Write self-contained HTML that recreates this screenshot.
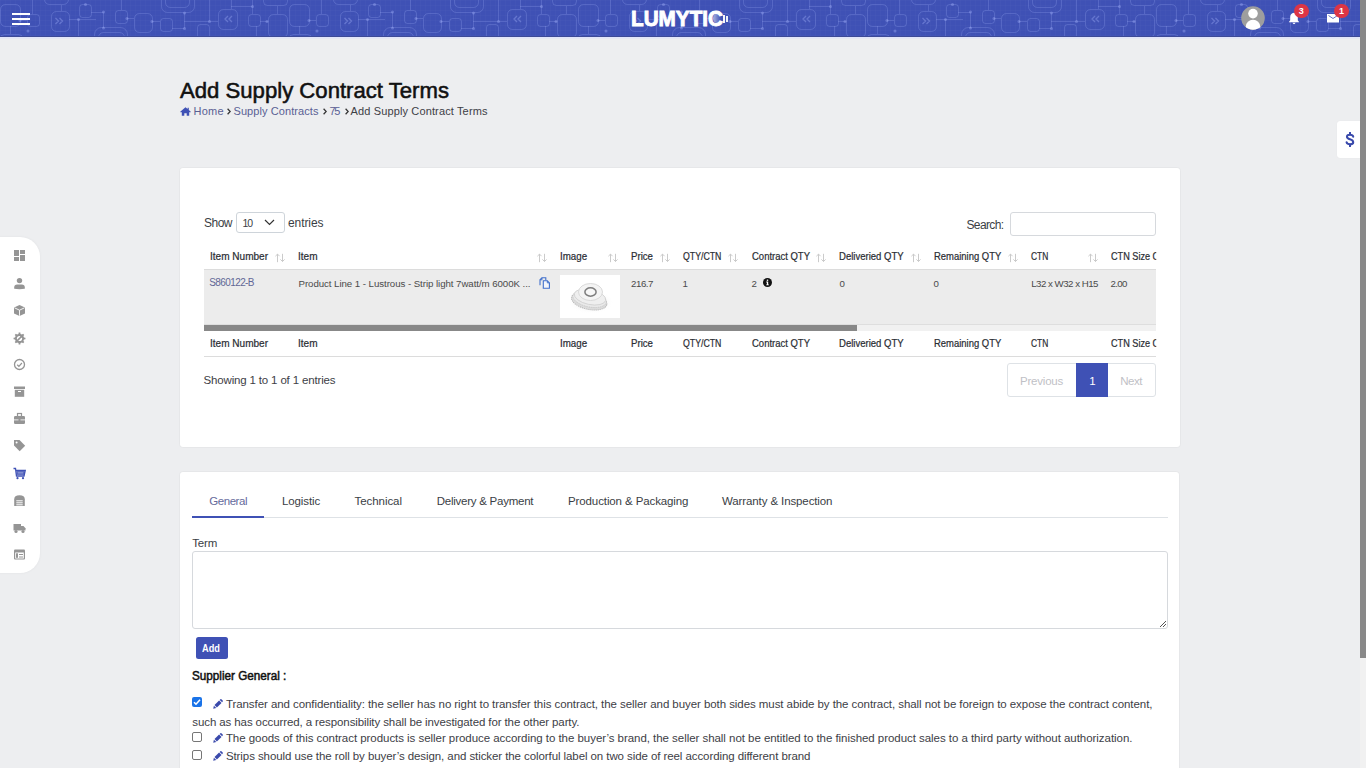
<!DOCTYPE html>
<html><head><meta charset="utf-8">
<style>
html,body{margin:0;padding:0;width:1366px;height:768px;overflow:hidden;background:#edeef0;font-family:"Liberation Sans",sans-serif;}
.tx{position:absolute;white-space:pre;font-family:"Liberation Sans",sans-serif;}
.abs{position:absolute;}
#hdr{position:absolute;left:0;top:0;width:1360px;height:37px;background:#3f51b5;overflow:hidden;}
#hdrline{position:absolute;left:0;top:37px;width:1360px;height:1px;background:#e1e5fb;}
#hdrline2{position:absolute;left:0;top:38px;width:1360px;height:1px;background:#e6e8f2;}
#hdrdark{position:absolute;left:0;top:36px;width:1360px;height:1px;background:#3d4a96;}
#sb{position:absolute;left:1360px;top:0;width:6px;height:768px;background:#f1f1f1;}
#sbt{position:absolute;left:1360px;top:0;width:6px;height:658px;background:#888;}
.card{position:absolute;background:#fff;border-radius:3px;box-shadow:0 0 0 1px rgba(0,0,0,0.018),0 0 2px rgba(0,0,0,0.03);}
.sico{position:absolute;left:13px;width:13px;height:13px;}
</style></head><body>
<div id="hdr">
<svg width="1360" height="37" style="position:absolute;left:0;top:0">
<defs>
<pattern id="gr" x="0" y="0" width="5" height="5" patternUnits="userSpaceOnUse"><path d="M0 0.5H5M0.5 0V5" stroke="rgba(255,255,255,0.017)" stroke-width="1"/></pattern>
<pattern id="pt" x="0" y="0" width="289" height="37" patternUnits="userSpaceOnUse">
<g fill="none" stroke="rgba(170,182,255,0.21)" stroke-width="1"><rect x="0.5" y="4.5" width="20" height="22" rx="5"/><rect x="27.5" y="14.5" width="12" height="12" rx="3"/><rect x="44.5" y="-6.5" width="24" height="11" rx="5"/><rect x="51.5" y="11.5" width="18" height="20" rx="5"/><rect x="79.5" y="4.5" width="12" height="13" rx="3"/><rect x="115.5" y="10.5" width="12" height="13" rx="3"/><rect x="134.5" y="13.5" width="18" height="19" rx="5"/><rect x="94.5" y="27.5" width="33" height="15" rx="7"/><rect x="98.5" y="32.5" width="26" height="10" rx="5"/><rect x="0.5" y="34.5" width="22" height="10" rx="4"/><rect x="160.5" y="18.5" width="12" height="13" rx="3"/><rect x="161.5" y="-5.5" width="33" height="18" rx="6"/><rect x="165.5" y="-5.5" width="24" height="13" rx="5"/><rect x="197.5" y="24.5" width="12" height="14" rx="3"/><rect x="218.5" y="9.5" width="19" height="20" rx="5"/><rect x="248.5" y="14.5" width="12" height="12" rx="3"/><rect x="268.5" y="14.5" width="19" height="23" rx="5"/><rect x="263.5" y="-3.5" width="24" height="9" rx="4"/><path d="M20 20.5H27M32.5 0V14M61.5 5V11M69 19.5H96M78.5 19.5V37M91 12.5H103M103.5 12V28M121.5 0V10M10.5 26V34M152 21.5H160M184.5 13V28.5M172 28.5H184M184 21.5H218M209.5 0V21M231.5 0V9M231 6.5H252M252.5 0V14M260 21.5H268M277.5 6V14M256.5 26V37M127 18.5H134"/></g>
<g fill="rgba(170,182,255,0.35)"><circle cx="20" cy="20.5" r="1.5"/><circle cx="85.5" cy="4.5" r="1.5"/><circle cx="103.5" cy="12" r="1.5"/><circle cx="103.5" cy="28" r="1.5"/><circle cx="127" cy="18.5" r="1.5"/><circle cx="152" cy="21.5" r="1.5"/><circle cx="184.5" cy="13" r="1.5"/><circle cx="184.5" cy="28.5" r="1.5"/><circle cx="267" cy="21.5" r="1.5"/><circle cx="209.5" cy="21.5" r="1.5"/><circle cx="252.5" cy="6.5" r="1.5"/><circle cx="28" cy="31" r="1.5"/><circle cx="78.5" cy="19.5" r="1.5"/></g>
<g fill="none" stroke="rgba(170,182,255,0.35)" stroke-width="1.3"><path d="M55.5 18l3 3-3 3M59.5 18l3 3-3 3M228 16l-3 3 3 3M232 16l-3 3 3 3"/></g>
</pattern>
</defs>
<rect width="1360" height="37" fill="url(#gr)"/><rect width="1360" height="37" fill="url(#pt)"/>
</svg>
<div class="abs" style="left:12px;top:13px;width:18px;height:1.5px;background:#fff"></div>
<div class="abs" style="left:12px;top:18px;width:18px;height:2px;background:#fff"></div>
<div class="abs" style="left:12px;top:23px;width:18px;height:2px;background:#fff"></div>
<!-- logo -->
<span style="position:absolute;left:631px;top:6px;font-size:21.5px;line-height:26px;font-weight:bold;color:#fff;-webkit-text-stroke:0.9px #fff;transform:scaleX(0.963);transform-origin:0 0;white-space:pre">LUMYTIC</span>
<div class="abs" style="left:713px;top:14px;width:8px;height:9px;background:linear-gradient(90deg,rgba(255,255,255,0.55),rgba(255,255,255,0));border-radius:50%"></div>
<div class="abs" style="left:723.2px;top:14.8px;width:2px;height:8.5px;background:#fff;opacity:.95"></div>
<div class="abs" style="left:726.4px;top:16px;width:1.8px;height:6.2px;background:#fff;opacity:.9"></div>
<!-- avatar -->
<svg class="abs" style="left:1241px;top:6px" width="24" height="24" viewBox="0 0 24 24">
<defs><clipPath id="avc"><circle cx="12" cy="12" r="11.8"/></clipPath></defs>
<circle cx="12" cy="12" r="11.8" fill="#9e9e9e"/>
<circle cx="12" cy="7.6" r="4.8" fill="#fff"/>
<ellipse cx="12" cy="20.5" rx="7.2" ry="6.8" fill="#fff" clip-path="url(#avc)"/>
</svg>
<!-- bell -->
<svg class="abs" style="left:1288px;top:12px" width="12" height="13" viewBox="0 0 12 13">
<path d="M6 0.8 C3.3 0.8 2.2 3 2.2 5.2 V8.2 L0.8 10.3 H11.2 L9.8 8.2 V5.2 C9.8 3 8.7 0.8 6 0.8Z" fill="#fff"/>
<path d="M4.4 10.8 Q6 13.5 7.6 10.8Z" fill="#fff"/>
</svg>
<div class="abs" style="left:1294px;top:3.7px;width:14.6px;height:14.6px;border-radius:50%;background:#dc3545;"></div>
<span class="tx" style="left:1298.8px;top:5px;font-size:9px;line-height:12px;font-weight:bold;color:#fff">3</span>
<!-- envelope -->
<svg class="abs" style="left:1327px;top:13.5px" width="12" height="9" viewBox="0 0 12 9">
<rect x="0" y="0" width="12" height="8.5" fill="#fff"/>
<path d="M1.5 1.5 L6 4.5 L10.5 1.5" fill="none" stroke="#3f51b5" stroke-width="0.8"/>
</svg>
<div class="abs" style="left:1334px;top:3.7px;width:14.6px;height:14.6px;border-radius:50%;background:#dc3545;"></div>
<span class="tx" style="left:1339px;top:5px;font-size:9px;line-height:12px;font-weight:bold;color:#fff">1</span>
</div>
<div id="hdrdark"></div><div id="hdrline"></div><div id="hdrline2"></div>

<!-- sidebar -->
<div class="abs" style="left:-20px;top:237px;width:60px;height:336px;background:#fff;border-radius:0 20px 20px 0;box-shadow:0 0 3px rgba(0,0,0,0.05)"></div>
<svg class='abs' style='left:13.3px;top:248.5px' width='13' height='13' viewBox='0 0 13 13'><rect x='1' y='1' width='5' height='6' fill='#959595'/><rect x='7' y='1' width='5' height='4' fill='#959595'/><rect x='1' y='8' width='5' height='4' fill='#959595'/><rect x='7' y='6' width='5' height='6' fill='#959595'/></svg>
<svg class='abs' style='left:13.3px;top:276.5px' width='13' height='13' viewBox='0 0 13 13'><circle cx='6.5' cy='3.6' r='2.7' fill='#959595'/><path d='M1.2 11.8V10.6Q1.2 7.6 4.2 7.6H8.8Q11.8 7.6 11.8 10.6V11.8Q6.5 12.6 1.2 11.8Z' fill='#959595'/></svg>
<svg class='abs' style='left:13.3px;top:304.0px' width='13' height='13' viewBox='0 0 13 13'><path d='M6.5 1L12 3.5V9.5L6.5 12L1 9.5V3.5Z' fill='#959595'/><path d='M1.5 3.8L6.5 6.2L11.5 3.8M6.5 6.2V11.8' fill='none' stroke='#fff' stroke-width='0.9'/></svg>
<svg class='abs' style='left:13.3px;top:331.5px' width='13' height='13' viewBox='0 0 13 13'><path d='M10.99 5.50 L12.44 5.66 L12.44 7.34 L10.99 7.50 L10.38 8.96 L11.29 10.11 L10.11 11.29 L8.96 10.38 L7.50 10.99 L7.34 12.44 L5.66 12.44 L5.50 10.99 L4.04 10.38 L2.89 11.29 L1.71 10.11 L2.62 8.96 L2.01 7.50 L0.56 7.34 L0.56 5.66 L2.01 5.50 L2.62 4.04 L1.71 2.89 L2.89 1.71 L4.04 2.62 L5.50 2.01 L5.66 0.56 L7.34 0.56 L7.50 2.01 L8.96 2.62 L10.11 1.71 L11.29 2.89 L10.38 4.04Z' fill='#959595'/><circle cx='6.5' cy='6.5' r='2.6' fill='#fff'/><path d='M3.6 9.4L8.2 4.8' stroke='#959595' stroke-width='1.6'/><circle cx='8.6' cy='4.4' r='1.3' fill='#959595'/></svg>
<svg class='abs' style='left:13.3px;top:358.0px' width='13' height='13' viewBox='0 0 13 13'><circle cx='6.5' cy='6.5' r='5' fill='none' stroke='#959595' stroke-width='1.3'/><path d='M4.2 6.7L5.9 8.3L8.9 5' fill='none' stroke='#959595' stroke-width='1.2'/></svg>
<svg class='abs' style='left:13.3px;top:385.0px' width='13' height='13' viewBox='0 0 13 13'><rect x='1' y='1.5' width='11' height='2.5' fill='#959595'/><rect x='1.8' y='4.8' width='9.4' height='7' fill='#959595'/><rect x='5' y='6' width='3' height='1' fill='#fff'/></svg>
<svg class='abs' style='left:13.3px;top:412.0px' width='13' height='13' viewBox='0 0 13 13'><rect x='1' y='4' width='11' height='8' rx='1.2' fill='#959595'/><rect x='4.5' y='1.5' width='4' height='3' fill='none' stroke='#959595' stroke-width='1.2'/><rect x='1' y='7.5' width='11' height='0.8' fill='#fff'/><rect x='5.5' y='7' width='2' height='2' fill='#959595'/></svg>
<svg class='abs' style='left:13.3px;top:439.0px' width='13' height='13' viewBox='0 0 13 13'><path d='M1 1H6.5L12.2 6.7L6.7 12.2L1 6.5Z' fill='#959595'/><circle cx='3.6' cy='3.6' r='1' fill='#fff'/></svg>
<svg class='abs' style='left:13.3px;top:466.5px' width='13' height='13' viewBox='0 0 13 13'><path d='M0.5 1.5H2.5L3.5 9H11L12.2 3.5H3' fill='none' stroke='#3f51b5' stroke-width='1.3'/><rect x='3.5' y='4.2' width='8' height='3.6' fill='#3f51b5'/><rect x='4.5' y='5.3' width='6' height='1.2' fill='#9fa8da'/><circle cx='4.5' cy='11.2' r='1.1' fill='#3f51b5'/><circle cx='10' cy='11.2' r='1.1' fill='#3f51b5'/></svg>
<svg class='abs' style='left:13.3px;top:494.0px' width='13' height='13' viewBox='0 0 13 13'><path d='M1.2 12V5.2Q1.2 1.3 6.5 1.3Q11.8 1.3 11.8 5.2V12Z' fill='#959595'/><rect x='3.3' y='6.3' width='6.4' height='1' fill='#fff'/><rect x='3.3' y='8.3' width='6.4' height='1' fill='#fff'/><rect x='3.3' y='10.3' width='6.4' height='1' fill='#fff'/></svg>
<svg class='abs' style='left:13.3px;top:521.0px' width='13' height='13' viewBox='0 0 13 13'><rect x='0.5' y='3' width='7.5' height='6.5' fill='#959595'/><path d='M8 5H10.5L12.5 7.3V9.5H8Z' fill='#959595'/><circle cx='3' cy='10.5' r='1.6' fill='#959595'/><circle cx='10' cy='10.5' r='1.6' fill='#959595'/></svg>
<svg class='abs' style='left:13.3px;top:547.5px' width='13' height='13' viewBox='0 0 13 13'><rect x='1' y='1.5' width='11' height='10' rx='1' fill='#959595'/><rect x='2.2' y='4.5' width='8.6' height='6' fill='#fff'/><rect x='3' y='5.3' width='2' height='4.5' fill='#959595'/><rect x='6' y='6' width='4' height='1' fill='#959595'/><rect x='6' y='8.5' width='4' height='1' fill='#959595'/></svg>

<!-- dollar widget -->
<div class="abs" style="left:1337px;top:121px;width:30px;height:37px;background:#fff;border-radius:3px 0 0 3px;box-shadow:0 0 1px rgba(0,0,0,0.08)"></div>
<svg class="abs" style="left:1344.5px;top:131.5px" width="10" height="15" viewBox="0 0 10 15"><path d="M8.2 4.6Q7.8 2.7 5 2.7Q2 2.7 2 4.8Q2 6.5 5 7.2Q8.2 8 8.2 10.2Q8.2 12.3 5 12.3Q2.1 12.3 1.6 10.3" fill="none" stroke="#3949ab" stroke-width="2.1" stroke-linecap="round"/><path d="M5 0.6V2.6M5 12.4V14.4" stroke="#3949ab" stroke-width="2" stroke-linecap="round"/></svg>

<!-- breadcrumb icons -->
<svg class="abs" style="left:180px;top:106.5px" width="11" height="9" viewBox="0 0 11 9">
<path d="M5.5 0.3L0.2 4.8L0.9 5.6L1.8 4.9V8.8H4.3V6.2H6.7V8.8H9.2V4.9L10.1 5.6L10.8 4.8L8.8 3.1V0.8H7.6V2.1Z" fill="#3f51b5"/>
</svg>
<svg class="abs" style="left:226.8px;top:108px" width="4" height="7" viewBox="0 0 4 7"><path d="M0.6 0.7L3.2 3.5L0.6 6.3" fill="none" stroke="#333" stroke-width="1.25"/></svg>
<svg class="abs" style="left:322.5px;top:108px" width="4" height="7" viewBox="0 0 4 7"><path d="M0.6 0.7L3.2 3.5L0.6 6.3" fill="none" stroke="#333" stroke-width="1.25"/></svg>
<svg class="abs" style="left:344.5px;top:108px" width="4" height="7" viewBox="0 0 4 7"><path d="M0.6 0.7L3.2 3.5L0.6 6.3" fill="none" stroke="#333" stroke-width="1.25"/></svg>
<!-- card 1 -->
<div class="card" style="left:180px;top:168px;width:1000px;height:279px;"></div>
<!-- select -->
<div class="abs" style="left:236px;top:212px;width:47px;height:19px;border:1px solid #ced4da;border-radius:3px;background:#fff"></div>
<svg class="abs" style="left:264px;top:219px" width="11" height="7" viewBox="0 0 11 7"><path d="M1 1l4.5 4.5L10 1" fill="none" stroke="#333" stroke-width="1.2"/></svg>
<!-- search input -->
<div class="abs" style="left:1010px;top:212px;width:144px;height:22px;border:1px solid #d6d9dd;border-radius:3px;background:#fff"></div>
<!-- table -->
<div class="abs" style="left:204px;top:269px;width:952px;height:1px;background:#dcdcdc"></div>
<div class="abs" style="left:204px;top:270px;width:952px;height:54px;background:#ececec"></div>
<div class="abs" style="left:204px;top:324px;width:952px;height:1px;background:#dedede"></div>
<div class="abs" style="left:204px;top:325px;width:952px;height:6px;background:#f1f1f1"></div>
<div class="abs" style="left:204px;top:325px;width:653px;height:6px;background:#888"></div>
<div class="abs" style="left:204px;top:356px;width:952px;height:1px;background:#dcdcdc"></div>
<svg class='abs' style='left:275.2px;top:252.5px' width='10' height='10' viewBox='0 0 10 10'><path d='M2.5 9.2V1M0.4 3.2L2.5 1.1L4.6 3.2M7.5 0.8V8.6M5.4 6.4L7.5 8.5L9.6 6.4' fill='none' stroke='#cbcbcb' stroke-width='1'/></svg>
<svg class='abs' style='left:536.8px;top:252.5px' width='10' height='10' viewBox='0 0 10 10'><path d='M2.5 9.2V1M0.4 3.2L2.5 1.1L4.6 3.2M7.5 0.8V8.6M5.4 6.4L7.5 8.5L9.6 6.4' fill='none' stroke='#cbcbcb' stroke-width='1'/></svg>
<svg class='abs' style='left:608.2px;top:252.5px' width='10' height='10' viewBox='0 0 10 10'><path d='M2.5 9.2V1M0.4 3.2L2.5 1.1L4.6 3.2M7.5 0.8V8.6M5.4 6.4L7.5 8.5L9.6 6.4' fill='none' stroke='#cbcbcb' stroke-width='1'/></svg>
<svg class='abs' style='left:660.2px;top:252.5px' width='10' height='10' viewBox='0 0 10 10'><path d='M2.5 9.2V1M0.4 3.2L2.5 1.1L4.6 3.2M7.5 0.8V8.6M5.4 6.4L7.5 8.5L9.6 6.4' fill='none' stroke='#cbcbcb' stroke-width='1'/></svg>
<svg class='abs' style='left:728.2px;top:252.5px' width='10' height='10' viewBox='0 0 10 10'><path d='M2.5 9.2V1M0.4 3.2L2.5 1.1L4.6 3.2M7.5 0.8V8.6M5.4 6.4L7.5 8.5L9.6 6.4' fill='none' stroke='#cbcbcb' stroke-width='1'/></svg>
<svg class='abs' style='left:816.2px;top:252.5px' width='10' height='10' viewBox='0 0 10 10'><path d='M2.5 9.2V1M0.4 3.2L2.5 1.1L4.6 3.2M7.5 0.8V8.6M5.4 6.4L7.5 8.5L9.6 6.4' fill='none' stroke='#cbcbcb' stroke-width='1'/></svg>
<svg class='abs' style='left:911.2px;top:252.5px' width='10' height='10' viewBox='0 0 10 10'><path d='M2.5 9.2V1M0.4 3.2L2.5 1.1L4.6 3.2M7.5 0.8V8.6M5.4 6.4L7.5 8.5L9.6 6.4' fill='none' stroke='#cbcbcb' stroke-width='1'/></svg>
<svg class='abs' style='left:1008.2px;top:252.5px' width='10' height='10' viewBox='0 0 10 10'><path d='M2.5 9.2V1M0.4 3.2L2.5 1.1L4.6 3.2M7.5 0.8V8.6M5.4 6.4L7.5 8.5L9.6 6.4' fill='none' stroke='#cbcbcb' stroke-width='1'/></svg>
<svg class='abs' style='left:1087.7px;top:252.5px' width='10' height='10' viewBox='0 0 10 10'><path d='M2.5 9.2V1M0.4 3.2L2.5 1.1L4.6 3.2M7.5 0.8V8.6M5.4 6.4L7.5 8.5L9.6 6.4' fill='none' stroke='#cbcbcb' stroke-width='1'/></svg>
<!-- copy icon -->
<svg class="abs" style="left:538.5px;top:276.5px" width="12" height="12" viewBox="0 0 12 12">
<path d="M1 8.2V2.8L3 0.8H6.8V3.2" fill="none" stroke="#4170cc" stroke-width="1.1"/>
<path d="M1 2.8H3V0.8" fill="none" stroke="#4170cc" stroke-width="0.9"/>
<path d="M4.3 3.8H8.3L10.4 5.9V11.2H4.3Z" fill="#f4f6fb" stroke="#4170cc" stroke-width="1.1"/>
<path d="M8.3 3.8V5.9H10.4" fill="none" stroke="#4170cc" stroke-width="0.9"/>
</svg>
<!-- product image -->
<div class="abs" style="left:560px;top:275px;width:60px;height:43px;background:#fff"></div>
<svg class="abs" style="left:560px;top:275px" width="60" height="43" viewBox="0 0 60 43">
<defs><radialGradient id="sh" cx="50%" cy="50%" r="50%"><stop offset="0" stop-color="#999" stop-opacity="0.45"/><stop offset="1" stop-color="#fff" stop-opacity="0"/></radialGradient></defs>
<ellipse cx="31" cy="27" rx="23" ry="12" fill="url(#sh)"/>
<g transform="rotate(12 30 22)">
<ellipse cx="30" cy="26" rx="18" ry="8.5" fill="#dcdcdc" stroke="#b9b9b9" stroke-width="1" stroke-dasharray="1.2 0.8"/>
<ellipse cx="30" cy="24" rx="17" ry="8" fill="#e9e9e9" stroke="#c4c4c4" stroke-width="0.9" stroke-dasharray="1 0.8"/>
<ellipse cx="30" cy="22" rx="16" ry="7.5" fill="#efefef" stroke="#cfcfcf" stroke-width="0.8"/>
</g>
<ellipse cx="30.5" cy="17" rx="12" ry="8.5" fill="#f4f4f4" stroke="#d6d6d6" stroke-width="0.9"/>
<ellipse cx="30.5" cy="17" rx="5.6" ry="4.2" fill="#f7f7f7" stroke="#7d7d7d" stroke-width="1.5"/>
</svg>
<!-- info icon -->
<svg class="abs" style="left:763px;top:278px" width="9" height="9" viewBox="0 0 9 9">
<circle cx="4.5" cy="4.5" r="4.5" fill="#111"/>
<rect x="3.8" y="1.6" width="1.4" height="1.3" fill="#fff"/>
<path d="M3.2 3.6H5.2V6.4H5.9V7.3H3.2V6.4H3.9V4.5H3.2Z" fill="#fff"/>
</svg>
<!-- pagination -->
<div class="abs" style="left:1007px;top:363px;width:147px;height:32px;border:1px solid #dee2e6;border-radius:3px;background:#fff"></div>
<div class="abs" style="left:1076px;top:363px;width:32px;height:34px;background:#3f51b5"></div>

<!-- card 2 -->
<div class="card" style="left:180px;top:472px;width:999px;height:310px;"></div>
<div class="abs" style="left:192px;top:517px;width:976px;height:1px;background:#dee2e6"></div>
<div class="abs" style="left:192px;top:516px;width:72px;height:2px;background:#3f51b5"></div>
<!-- textarea -->
<div class="abs" style="left:192px;top:551px;width:974px;height:76px;border:1px solid #d6d9dd;border-radius:3px;background:#fff"></div>
<svg class="abs" style="left:1158px;top:619px" width="9" height="9" viewBox="0 0 9 9"><path d="M8 2L2 8M8 5L5 8" stroke="#555" stroke-width="1"/></svg>
<!-- add button -->
<div class="abs" style="left:196px;top:637px;width:32px;height:22px;background:#3f51b5;border-radius:2.5px"></div>
<!-- checkboxes -->
<div class="abs" style="left:192px;top:697px;width:10px;height:10px;background:#1a73e8;border-radius:2px"></div>
<svg class="abs" style="left:192px;top:697px" width="10" height="10" viewBox="0 0 10 10"><path d="M2 5.2L4 7.2L8 2.8" fill="none" stroke="#fff" stroke-width="1.6"/></svg>
<div class="abs" style="left:192px;top:732px;width:8px;height:8px;border:1px solid #767676;border-radius:2px;background:#fff"></div>
<div class="abs" style="left:192px;top:750px;width:8px;height:8px;border:1px solid #767676;border-radius:2px;background:#fff"></div>
<svg class='abs' style='left:213px;top:699.2px' width='10' height='10' viewBox='0 0 10 10'><path d='M0.2 9.8L0.9 6.7L3.3 9.1Z' fill='#3949ab'/><path d='M1.5 6.1L6.1 1.5L8.5 3.9L3.9 8.5Z' fill='#3949ab'/><path d='M6.7 0.9L7.4 0.3Q7.9 -0.1 8.4 0.3L9.7 1.6Q10.1 2.1 9.7 2.6L9.1 3.3Z' fill='#3949ab'/></svg>
<svg class='abs' style='left:213px;top:732.7px' width='10' height='10' viewBox='0 0 10 10'><path d='M0.2 9.8L0.9 6.7L3.3 9.1Z' fill='#3949ab'/><path d='M1.5 6.1L6.1 1.5L8.5 3.9L3.9 8.5Z' fill='#3949ab'/><path d='M6.7 0.9L7.4 0.3Q7.9 -0.1 8.4 0.3L9.7 1.6Q10.1 2.1 9.7 2.6L9.1 3.3Z' fill='#3949ab'/></svg>
<svg class='abs' style='left:213px;top:750.9px' width='10' height='10' viewBox='0 0 10 10'><path d='M0.2 9.8L0.9 6.7L3.3 9.1Z' fill='#3949ab'/><path d='M1.5 6.1L6.1 1.5L8.5 3.9L3.9 8.5Z' fill='#3949ab'/><path d='M6.7 0.9L7.4 0.3Q7.9 -0.1 8.4 0.3L9.7 1.6Q10.1 2.1 9.7 2.6L9.1 3.3Z' fill='#3949ab'/></svg>

<span class='tx' style='left:179.50px;top:77.78px;font-size:22px;line-height:26.4px;font-weight:normal;color:#111;letter-spacing:0.000px;transform:scaleX(1.0060);transform-origin:0 0;;-webkit-text-stroke:0.55px #111'>Add Supply Contract Terms</span>
<span class='tx' style='left:193.50px;top:104.59px;font-size:11px;line-height:13.2px;font-weight:normal;color:#5a5f94;letter-spacing:0.219px;transform:scaleX(1.0000);transform-origin:0 0;'>Home</span>
<span class='tx' style='left:233.50px;top:104.59px;font-size:11px;line-height:13.2px;font-weight:normal;color:#5a5f94;letter-spacing:0.082px;transform:scaleX(1.0000);transform-origin:0 0;'>Supply Contracts</span>
<span class='tx' style='left:329.50px;top:104.59px;font-size:11px;line-height:13.2px;font-weight:normal;color:#5a5f94;letter-spacing:-1.250px;transform:scaleX(1.0000);transform-origin:0 0;'>75</span>
<span class='tx' style='left:350.50px;top:104.59px;font-size:11px;line-height:13.2px;font-weight:normal;color:#3d4046;letter-spacing:0.137px;transform:scaleX(1.0000);transform-origin:0 0;'>Add Supply Contract Terms</span>
<span class='tx' style='left:204.00px;top:215.64px;font-size:12px;line-height:14.4px;font-weight:normal;color:#3a3e45;letter-spacing:-0.510px;transform:scaleX(1.0000);transform-origin:0 0;'>Show</span>
<span class='tx' style='left:242.50px;top:216.56px;font-size:10.5px;line-height:12.6px;font-weight:normal;color:#3a3e45;letter-spacing:-1.188px;transform:scaleX(1.0000);transform-origin:0 0;'>10</span>
<span class='tx' style='left:288.00px;top:215.64px;font-size:12px;line-height:14.4px;font-weight:normal;color:#3a3e45;letter-spacing:-0.089px;transform:scaleX(1.0000);transform-origin:0 0;'>entries</span>
<span class='tx' style='left:966.50px;top:217.64px;font-size:12px;line-height:14.4px;font-weight:normal;color:#3a3e45;letter-spacing:-0.643px;transform:scaleX(1.0000);transform-origin:0 0;'>Search:</span>
<span class='tx' style='left:209.50px;top:250.06px;font-size:10.5px;line-height:12.6px;font-weight:normal;color:#2a2d33;letter-spacing:0.000px;transform:scaleX(0.9557);transform-origin:0 0;;-webkit-text-stroke:0.22px #2a2d33'>Item Number</span>
<span class='tx' style='left:209.50px;top:337.06px;font-size:10.5px;line-height:12.6px;font-weight:normal;color:#2a2d33;letter-spacing:0.000px;transform:scaleX(0.9557);transform-origin:0 0;;-webkit-text-stroke:0.22px #2a2d33'>Item Number</span>
<span class='tx' style='left:298.00px;top:250.06px;font-size:10.5px;line-height:12.6px;font-weight:normal;color:#2a2d33;letter-spacing:0.000px;transform:scaleX(0.9549);transform-origin:0 0;;-webkit-text-stroke:0.22px #2a2d33'>Item</span>
<span class='tx' style='left:298.00px;top:337.06px;font-size:10.5px;line-height:12.6px;font-weight:normal;color:#2a2d33;letter-spacing:0.000px;transform:scaleX(0.9549);transform-origin:0 0;;-webkit-text-stroke:0.22px #2a2d33'>Item</span>
<span class='tx' style='left:559.80px;top:250.06px;font-size:10.5px;line-height:12.6px;font-weight:normal;color:#2a2d33;letter-spacing:0.000px;transform:scaleX(0.9285);transform-origin:0 0;;-webkit-text-stroke:0.22px #2a2d33'>Image</span>
<span class='tx' style='left:559.80px;top:337.06px;font-size:10.5px;line-height:12.6px;font-weight:normal;color:#2a2d33;letter-spacing:0.000px;transform:scaleX(0.9285);transform-origin:0 0;;-webkit-text-stroke:0.22px #2a2d33'>Image</span>
<span class='tx' style='left:631.00px;top:250.06px;font-size:10.5px;line-height:12.6px;font-weight:normal;color:#2a2d33;letter-spacing:0.000px;transform:scaleX(0.9191);transform-origin:0 0;;-webkit-text-stroke:0.22px #2a2d33'>Price</span>
<span class='tx' style='left:631.00px;top:337.06px;font-size:10.5px;line-height:12.6px;font-weight:normal;color:#2a2d33;letter-spacing:0.000px;transform:scaleX(0.9191);transform-origin:0 0;;-webkit-text-stroke:0.22px #2a2d33'>Price</span>
<span class='tx' style='left:682.50px;top:250.06px;font-size:10.5px;line-height:12.6px;font-weight:normal;color:#2a2d33;letter-spacing:0.000px;transform:scaleX(0.8331);transform-origin:0 0;;-webkit-text-stroke:0.22px #2a2d33'>QTY/CTN</span>
<span class='tx' style='left:682.50px;top:337.06px;font-size:10.5px;line-height:12.6px;font-weight:normal;color:#2a2d33;letter-spacing:0.000px;transform:scaleX(0.8331);transform-origin:0 0;;-webkit-text-stroke:0.22px #2a2d33'>QTY/CTN</span>
<span class='tx' style='left:751.50px;top:250.06px;font-size:10.5px;line-height:12.6px;font-weight:normal;color:#2a2d33;letter-spacing:0.000px;transform:scaleX(0.9036);transform-origin:0 0;;-webkit-text-stroke:0.22px #2a2d33'>Contract QTY</span>
<span class='tx' style='left:751.50px;top:337.06px;font-size:10.5px;line-height:12.6px;font-weight:normal;color:#2a2d33;letter-spacing:0.000px;transform:scaleX(0.9036);transform-origin:0 0;;-webkit-text-stroke:0.22px #2a2d33'>Contract QTY</span>
<span class='tx' style='left:839.20px;top:250.06px;font-size:10.5px;line-height:12.6px;font-weight:normal;color:#2a2d33;letter-spacing:0.000px;transform:scaleX(0.9087);transform-origin:0 0;;-webkit-text-stroke:0.22px #2a2d33'>Deliveried QTY</span>
<span class='tx' style='left:839.20px;top:337.06px;font-size:10.5px;line-height:12.6px;font-weight:normal;color:#2a2d33;letter-spacing:0.000px;transform:scaleX(0.9087);transform-origin:0 0;;-webkit-text-stroke:0.22px #2a2d33'>Deliveried QTY</span>
<span class='tx' style='left:933.80px;top:250.06px;font-size:10.5px;line-height:12.6px;font-weight:normal;color:#2a2d33;letter-spacing:0.000px;transform:scaleX(0.8996);transform-origin:0 0;;-webkit-text-stroke:0.22px #2a2d33'>Remaining QTY</span>
<span class='tx' style='left:933.80px;top:337.06px;font-size:10.5px;line-height:12.6px;font-weight:normal;color:#2a2d33;letter-spacing:0.000px;transform:scaleX(0.8996);transform-origin:0 0;;-webkit-text-stroke:0.22px #2a2d33'>Remaining QTY</span>
<span class='tx' style='left:1031.20px;top:250.06px;font-size:10.5px;line-height:12.6px;font-weight:normal;color:#2a2d33;letter-spacing:0.000px;transform:scaleX(0.8012);transform-origin:0 0;;-webkit-text-stroke:0.22px #2a2d33'>CTN</span>
<span class='tx' style='left:1031.20px;top:337.06px;font-size:10.5px;line-height:12.6px;font-weight:normal;color:#2a2d33;letter-spacing:0.000px;transform:scaleX(0.8012);transform-origin:0 0;;-webkit-text-stroke:0.22px #2a2d33'>CTN</span>
<span class='tx' style='left:1110.50px;top:250.06px;font-size:10.5px;line-height:12.6px;font-weight:normal;color:#2a2d33;letter-spacing:0.000px;transform:scaleX(0.8700);transform-origin:0 0;clip-path:inset(0 calc(100% - 52px) 0 0);-webkit-text-stroke:0.22px #2a2d33'>CTN Size CBM</span>
<span class='tx' style='left:1110.50px;top:337.06px;font-size:10.5px;line-height:12.6px;font-weight:normal;color:#2a2d33;letter-spacing:0.000px;transform:scaleX(0.8700);transform-origin:0 0;clip-path:inset(0 calc(100% - 52px) 0 0);-webkit-text-stroke:0.22px #2a2d33'>CTN Size CBM</span>
<span class='tx' style='left:209.30px;top:277.34px;font-size:10px;line-height:12.0px;font-weight:normal;color:#626796;letter-spacing:-0.606px;transform:scaleX(1.0000);transform-origin:0 0;'>S860122-B</span>
<span class='tx' style='left:298.50px;top:277.62px;font-size:9.7px;line-height:11.64px;font-weight:normal;color:#4a4a4a;letter-spacing:-0.059px;transform:scaleX(1.0000);transform-origin:0 0;'>Product Line 1 - Lustrous - Strip light 7watt/m 6000K ...</span>
<span class='tx' style='left:631.00px;top:277.62px;font-size:9.7px;line-height:11.64px;font-weight:normal;color:#4a4a4a;letter-spacing:-0.438px;transform:scaleX(1.0000);transform-origin:0 0;'>216.7</span>
<span class='tx' style='left:682.50px;top:277.62px;font-size:9.7px;line-height:11.64px;font-weight:normal;color:#4a4a4a;letter-spacing:0.000px;transform:scaleX(1.0000);transform-origin:0 0;'>1</span>
<span class='tx' style='left:751.50px;top:277.62px;font-size:9.7px;line-height:11.64px;font-weight:normal;color:#4a4a4a;letter-spacing:0.000px;transform:scaleX(1.0000);transform-origin:0 0;'>2</span>
<span class='tx' style='left:839.50px;top:277.62px;font-size:9.7px;line-height:11.64px;font-weight:normal;color:#4a4a4a;letter-spacing:0.000px;transform:scaleX(1.0000);transform-origin:0 0;'>0</span>
<span class='tx' style='left:933.50px;top:277.62px;font-size:9.7px;line-height:11.64px;font-weight:normal;color:#4a4a4a;letter-spacing:0.000px;transform:scaleX(1.0000);transform-origin:0 0;'>0</span>
<span class='tx' style='left:1031.20px;top:277.62px;font-size:9.7px;line-height:11.64px;font-weight:normal;color:#4a4a4a;letter-spacing:-0.501px;transform:scaleX(1.0000);transform-origin:0 0;'>L32 x W32 x H15</span>
<span class='tx' style='left:1110.50px;top:277.62px;font-size:9.7px;line-height:11.64px;font-weight:normal;color:#4a4a4a;letter-spacing:-0.620px;transform:scaleX(1.0000);transform-origin:0 0;'>2.00</span>
<span class='tx' style='left:203.50px;top:374.12px;font-size:11.5px;line-height:13.8px;font-weight:normal;color:#3d4046;letter-spacing:-0.160px;transform:scaleX(1.0000);transform-origin:0 0;'>Showing 1 to 1 of 1 entries</span>
<span class='tx' style='left:1020.00px;top:375.12px;font-size:11.5px;line-height:13.8px;font-weight:normal;color:#bfc1c6;letter-spacing:-0.207px;transform:scaleX(1.0000);transform-origin:0 0;'>Previous</span>
<span class='tx' style='left:1089.30px;top:375.12px;font-size:11.5px;line-height:13.8px;font-weight:normal;color:#fff;letter-spacing:0.000px;transform:scaleX(1.0000);transform-origin:0 0;'>1</span>
<span class='tx' style='left:1120.20px;top:375.12px;font-size:11.5px;line-height:13.8px;font-weight:normal;color:#bfc1c6;letter-spacing:-0.485px;transform:scaleX(1.0000);transform-origin:0 0;'>Next</span>
<span class='tx' style='left:209.30px;top:494.62px;font-size:11.5px;line-height:13.8px;font-weight:normal;color:#656a9c;letter-spacing:-0.454px;transform:scaleX(1.0000);transform-origin:0 0;'>General</span>
<span class='tx' style='left:281.90px;top:494.62px;font-size:11.5px;line-height:13.8px;font-weight:normal;color:#3a3e45;letter-spacing:-0.086px;transform:scaleX(1.0000);transform-origin:0 0;'>Logistic</span>
<span class='tx' style='left:354.50px;top:494.62px;font-size:11.5px;line-height:13.8px;font-weight:normal;color:#3a3e45;letter-spacing:-0.057px;transform:scaleX(1.0000);transform-origin:0 0;'>Technical</span>
<span class='tx' style='left:436.80px;top:494.62px;font-size:11.5px;line-height:13.8px;font-weight:normal;color:#3a3e45;letter-spacing:-0.252px;transform:scaleX(1.0000);transform-origin:0 0;'>Delivery &amp; Payment</span>
<span class='tx' style='left:568.00px;top:494.62px;font-size:11.5px;line-height:13.8px;font-weight:normal;color:#3a3e45;letter-spacing:-0.107px;transform:scaleX(1.0000);transform-origin:0 0;'>Production &amp; Packaging</span>
<span class='tx' style='left:722.00px;top:494.62px;font-size:11.5px;line-height:13.8px;font-weight:normal;color:#3a3e45;letter-spacing:-0.111px;transform:scaleX(1.0000);transform-origin:0 0;'>Warranty &amp; Inspection</span>
<span class='tx' style='left:192.30px;top:536.62px;font-size:11.5px;line-height:13.8px;font-weight:normal;color:#3a3e45;letter-spacing:-0.188px;transform:scaleX(1.0000);transform-origin:0 0;'>Term</span>
<span class='tx' style='left:202.20px;top:642.53px;font-size:10px;line-height:12.0px;font-weight:bold;color:#fff;letter-spacing:0.000px;transform:scaleX(0.9202);transform-origin:0 0;'>Add</span>
<span class='tx' style='left:192.20px;top:668.64px;font-size:12px;line-height:14.4px;font-weight:normal;color:#111;letter-spacing:0.000px;transform:scaleX(0.9748);transform-origin:0 0;;-webkit-text-stroke:0.5px #111'>Supplier General :</span>
<span class='tx' style='left:225.90px;top:697.92px;font-size:11.5px;line-height:13.8px;font-weight:normal;color:#3d4046;letter-spacing:-0.066px;transform:scaleX(1.0000);transform-origin:0 0;'>Transfer and confidentiality: the seller has no right to transfer this contract, the seller and buyer both sides must abide by the contract, shall not be foreign to expose the contract content,</span>
<span class='tx' style='left:192.30px;top:716.02px;font-size:11.5px;line-height:13.8px;font-weight:normal;color:#3d4046;letter-spacing:-0.104px;transform:scaleX(1.0000);transform-origin:0 0;'>such as has occurred, a responsibility shall be investigated for the other party.</span>
<span class='tx' style='left:225.90px;top:731.92px;font-size:11.5px;line-height:13.8px;font-weight:normal;color:#3d4046;letter-spacing:-0.045px;transform:scaleX(1.0000);transform-origin:0 0;'>The goods of this contract products is seller produce according to the buyer’s brand, the seller shall not be entitled to the finished product sales to a third party without authorization.</span>
<span class='tx' style='left:225.90px;top:750.02px;font-size:11.5px;line-height:13.8px;font-weight:normal;color:#3d4046;letter-spacing:-0.082px;transform:scaleX(1.0000);transform-origin:0 0;'>Strips should use the roll by buyer’s design, and sticker the colorful label on two side of reel according different brand</span>
<div id="sb"></div><div id="sbt"></div>
</body></html>
